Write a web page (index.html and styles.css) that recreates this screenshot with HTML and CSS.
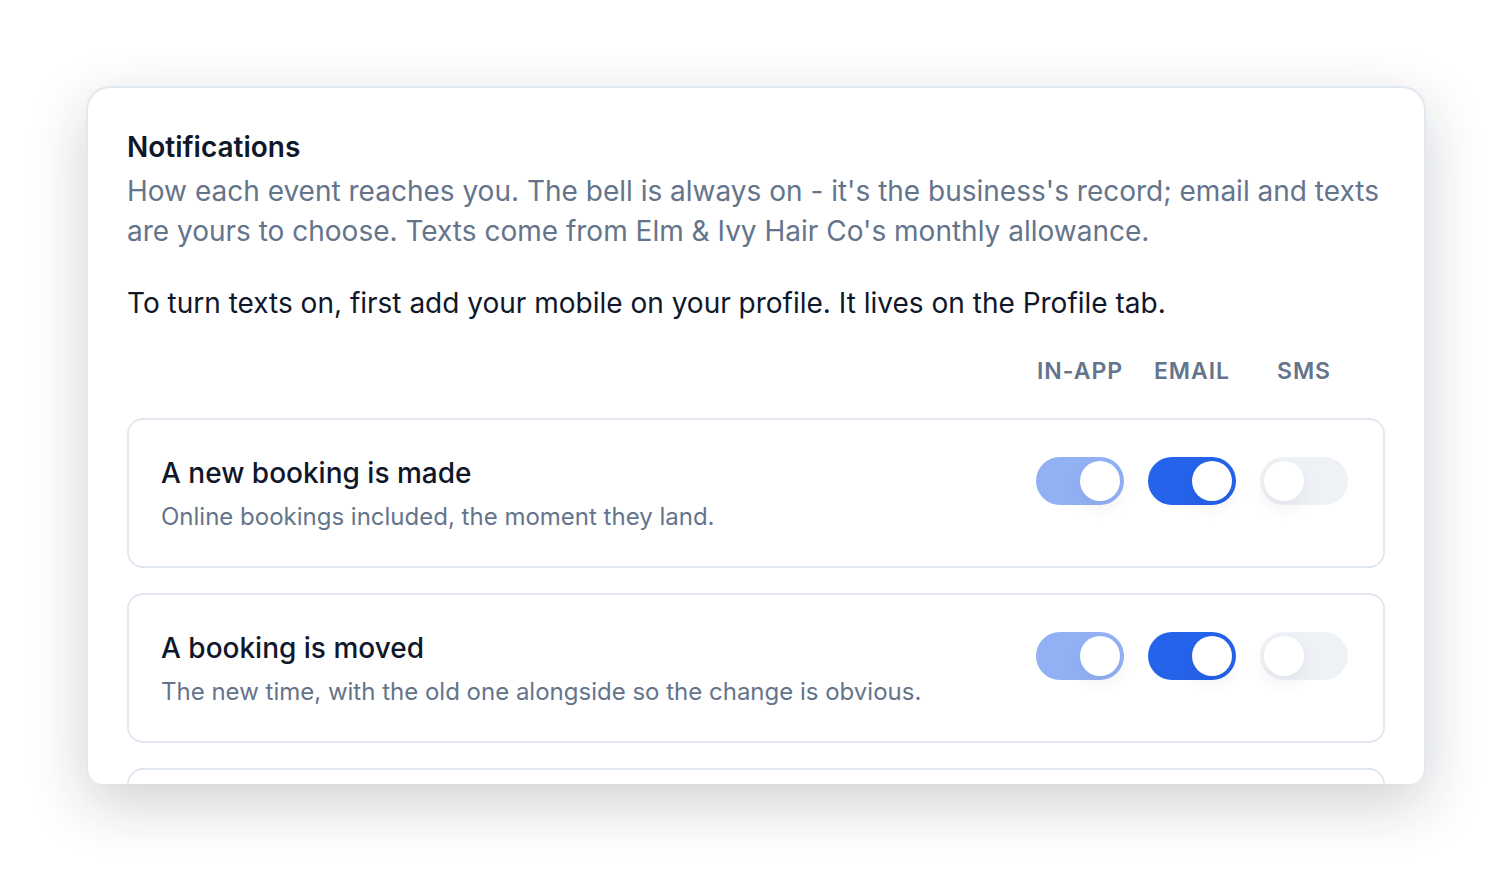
FILE: index.html
```html
<!DOCTYPE html>
<html lang="en">
<head>
<meta charset="utf-8">
<title>Notifications</title>
<link rel="stylesheet" href="styles.css">
</head>
<body>
<div class="stage">
  <section class="card">
    <h1 class="title">Notifications</h1>
    <p class="lead">How each event reaches you. The bell is always on - it's the business's record; email and texts are yours to choose. Texts come from Elm &amp; Ivy Hair Co's monthly allowance.</p>
    <p class="note">To turn texts on, first add your mobile on your profile. It lives on the Profile tab.</p>
    <div class="heads">
      <span class="head">IN-APP</span>
      <span class="head">EMAIL</span>
      <span class="head">SMS</span>
    </div>
    <div class="rows">
      <div class="row">
        <div class="text">
          <div class="row-title">A new booking is made</div>
          <div class="row-desc">Online bookings included, the moment they land.</div>
        </div>
        <div class="toggles">
          <span class="toggle on locked"><span class="knob"></span></span>
          <span class="toggle on"><span class="knob"></span></span>
          <span class="toggle off"><span class="knob"></span></span>
        </div>
      </div>
      <div class="row">
        <div class="text">
          <div class="row-title">A booking is moved</div>
          <div class="row-desc">The new time, with the old one alongside so the change is obvious.</div>
        </div>
        <div class="toggles">
          <span class="toggle on locked"><span class="knob"></span></span>
          <span class="toggle on"><span class="knob"></span></span>
          <span class="toggle off"><span class="knob"></span></span>
        </div>
      </div>
      <div class="row">
        <div class="text">
          <div class="row-title">A booking is cancelled</div>
          <div class="row-desc">Including who cancelled it and when.</div>
        </div>
        <div class="toggles">
          <span class="toggle on locked"><span class="knob"></span></span>
          <span class="toggle on"><span class="knob"></span></span>
          <span class="toggle off"><span class="knob"></span></span>
        </div>
      </div>
    </div>
  </section>
</div>
</body>
</html>
```

FILE: styles.css
```css
* { box-sizing: border-box; }
html, body {
  margin: 0;
  padding: 0;
  background: #ffffff;
  font-family: Inter, "Noto Sans", sans-serif;
  color: #0f172a;
}
.stage {
  padding: 86px 86px 0 86px;
  height: 888px;
  overflow: hidden;
}
.card {
  height: 698px;
  overflow: hidden;
  background: #ffffff;
  border: 2px solid #e2e8f0;
  border-bottom: none;
  border-radius: 24px 24px 16px 16px;
  padding: 41px 39px 0 39px;
  box-shadow: 0 20px 60px rgba(15, 23, 42, 0.2);
}
.title {
  margin: 0;
  font-size: 28px;
  line-height: 36px;
  font-weight: 600;
  color: #0f172a;
}
.lead {
  margin: 6px 0 0 0;
  font-size: 28px;
  line-height: 40px;
  color: #64748b;
}
.note {
  margin: 32px 0 0 0;
  font-size: 28px;
  line-height: 40px;
  color: #0f172a;
}
.heads {
  display: flex;
  justify-content: flex-end;
  gap: 24px;
  padding-right: 37px;
  margin-top: 34px;
}
.head {
  width: 88px;
  text-align: center;
  font-size: 23px;
  line-height: 28px;
  font-weight: 600;
  letter-spacing: 1px;
  color: #64748b;
  white-space: nowrap;
}
.rows {
  margin-top: 33px;
  display: flex;
  flex-direction: column;
  gap: 25px;
}
.row {
  display: flex;
  justify-content: space-between;
  align-items: flex-start;
  border: 2px solid #e2e8f0;
  border-radius: 16px;
  padding: 35px 35px 33px 32px;
}
.row-title {
  font-size: 28px;
  line-height: 36px;
  font-weight: 500;
  color: #0f172a;
}
.row-desc {
  margin-top: 10px;
  font-size: 24px;
  line-height: 32px;
  color: #64748b;
}
.toggles {
  display: flex;
  gap: 24px;
  padding-top: 2px;
}
.toggle {
  position: relative;
  display: block;
  width: 88px;
  height: 48px;
  border-radius: 24px;
  background: #2563eb;
}
.toggle.locked { background: #92b1f5; }
.toggle.off { background: #eef2f6; }
.knob {
  position: absolute;
  top: 4px;
  left: 44px;
  width: 40px;
  height: 40px;
  border-radius: 50%;
  background: #ffffff;
  box-shadow: 0 8px 18px rgba(15, 23, 42, 0.06);
}
.toggle.off .knob { left: 4px; }
```
